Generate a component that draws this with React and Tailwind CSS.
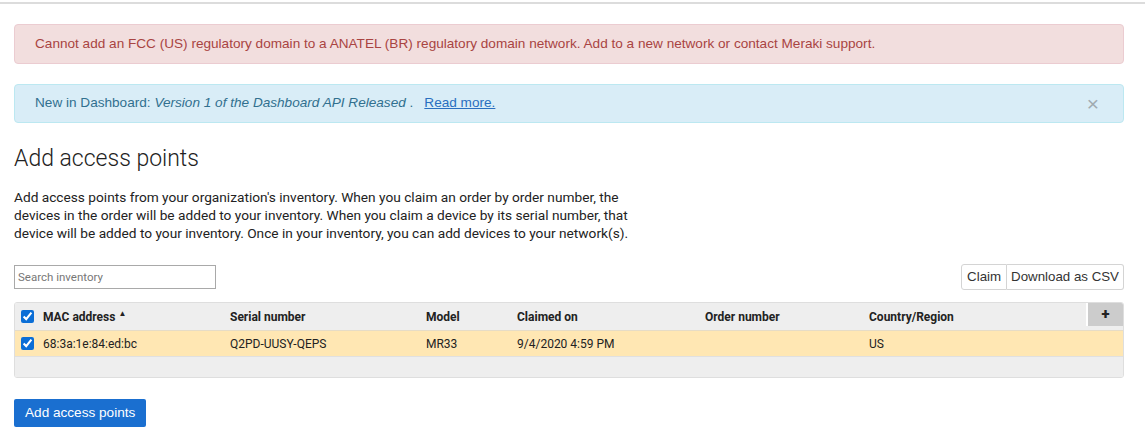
import { useState } from "react";

const rows = [
  {
    mac: "68:3a:1e:84:ed:bc",
    serial: "Q2PD-UUSY-QEPS",
    model: "MR33",
    claimed: "9/4/2020 4:59 PM",
    order: "",
    country: "US",
  },
];

function Check({ checked, onChange }) {
  return (
    <input
      type="checkbox"
      checked={checked}
      onChange={onChange}
      className="w-[13px] h-[13px] m-0 accent-[#0b6ed6] align-middle"
    />
  );
}

export default function App() {
  const [showInfo, setShowInfo] = useState(true);
  const [checked, setChecked] = useState(true);

  return (
    <div className="w-[1145px] h-[446px] bg-white overflow-hidden font-['Liberation_Sans',Arial,sans-serif]">
      <div className="border-t-2 border-[#dcdcdc] mt-[2px]" />

      <div className="pl-[14px] pr-[21px] pt-[20px]">
        {/* error alert */}
        <div className="h-[40px] flex items-center px-[20px] rounded-[4px] border border-[#ebccd1] bg-[#f2dede] text-[#a94442] text-[13.6px]">
          Cannot add an FCC (US) regulatory domain to a ANATEL (BR) regulatory domain network. Add to a new network or contact Meraki support.
        </div>

        {/* info alert */}
        {showInfo && (
          <div className="mt-[20px] h-[39px] flex items-center px-[20px] rounded-[4px] border border-[#bce8f1] bg-[#d9edf7] text-[#31708f] text-[13.6px]">
            <span>
              New in Dashboard: <em>Version 1 of the Dashboard API Released</em> .
            </span>
            <a href="#" className="ml-[11px] text-[#2a6fc0] underline">
              Read more.
            </a>
            <button
              onClick={() => setShowInfo(false)}
              className="ml-auto mr-[4px] text-[#a0aab0] text-[21px] leading-none font-light"
            >
              ×
            </button>
          </div>
        )}

        <h1 className="mt-[22px] font-['Roboto',sans-serif] font-light text-[23px] leading-[28px] text-[#222]">
          Add access points
        </h1>

        <p className="mt-[15px] w-[630px] font-['Roboto',sans-serif] text-[13.7px] leading-[18px] text-[#222]">
          Add access points from your organization's inventory. When you claim an order by order number, the devices in the order will be added to your inventory. When you claim a device by its serial number, that device will be added to your inventory. Once in your inventory, you can add devices to your network(s).
        </p>

        <div className="mt-[22px] flex items-center justify-between">
          <input
            type="text"
            placeholder="Search inventory"
            className="w-[202px] h-[24px] border border-[#a9a9a9] px-[3px] text-[11.5px] font-['Roboto',sans-serif] placeholder-[#777] outline-none"
          />
          <div className="flex h-[26px] text-[13.3px] text-[#333]">
            <button className="px-[5px] border border-[#d4d4d4] rounded-l-[3px] bg-white">
              Claim
            </button>
            <button className="px-[4px] border border-l-0 border-[#d4d4d4] rounded-r-[3px] bg-white">
              Download as CSV
            </button>
          </div>
        </div>

        {/* table */}
        <div className="mt-[12px] rounded-[3px] border border-[#dedede] overflow-hidden font-['Roboto',sans-serif] text-[12px] text-[#222]">
          <div className="grid grid-cols-[28px_187px_196px_91px_188px_164px_1fr_37px] items-center h-[27px] bg-[#eeeeee] font-bold">
            <div className="pl-[6px] flex items-center">
              <Check checked={checked} onChange={() => setChecked(!checked)} />
            </div>
            <div>
              MAC address <span className="text-[8px] align-top">▲</span>
            </div>
            <div>Serial number</div>
            <div>Model</div>
            <div>Claimed on</div>
            <div>Order number</div>
            <div>Country/Region</div>
            <div className="self-start h-[23px] bg-[#cccccc] border-l-2 border-white flex items-center justify-center text-[15px] font-black">
              +
            </div>
          </div>
          {rows.map((r) => (
            <div
              key={r.serial}
              className="grid grid-cols-[28px_187px_196px_91px_188px_164px_1fr_37px] items-center h-[26px] bg-[#ffe7b3] border-t border-[#e6dcc6]"
            >
              <div className="pl-[6px] flex items-center">
                <Check checked={checked} onChange={() => setChecked(!checked)} />
              </div>
              <div>{r.mac}</div>
              <div>{r.serial}</div>
              <div>{r.model}</div>
              <div>{r.claimed}</div>
              <div>{r.order}</div>
              <div>{r.country}</div>
              <div />
            </div>
          ))}
          <div className="h-[21px] bg-[#eeeeee] border-t border-[#e0e0e0]" />
        </div>

        <button className="mt-[21px] h-[28px] px-[11px] rounded-[2px] bg-[#1a6fd0] text-white text-[13.6px]">
          Add access points
        </button>
      </div>
    </div>
  );
}
